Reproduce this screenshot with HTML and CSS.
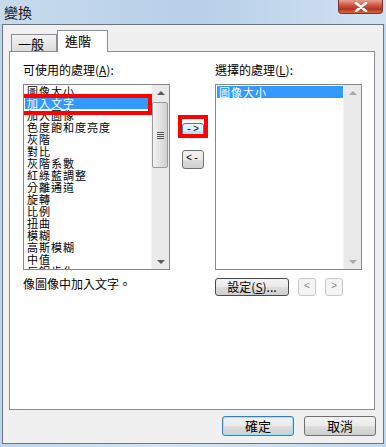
FILE: index.html
```html
<!DOCTYPE html>
<html>
<head>
  <title>變換</title>
  <link rel="stylesheet" href="styles.css">
</head>
<body>
  <div class="window">
    <div class="titlebar">
      <span class="title">變換</span>
      <span class="close">
        <svg width="16" height="10" viewBox="0 0 16 10"><path d="M3 1 L13 9 M13 1 L3 9" stroke="#fff" stroke-width="2.6" stroke-linecap="round"/></svg>
      </span>
    </div>
    <div class="client">
      <div class="tabs">
        <div class="tab">一般</div>
        <div class="tab active">進階</div>
      </div>
      <div class="panel">
        <div class="cols">
          <div class="col">
            <div class="label">可使用的處理(<u>A</u>):</div>
            <div class="listbox">
              <div class="items shifted">
                <div class="item">圖像大小</div>
                <div class="item sel">加入文字</div>
                <div class="item">加入圖像</div>
                <div class="item">色度飽和度亮度</div>
                <div class="item">灰階</div>
                <div class="item">對比</div>
                <div class="item">灰階系數</div>
                <div class="item">紅綠藍調整</div>
                <div class="item">分離通道</div>
                <div class="item">旋轉</div>
                <div class="item">比例</div>
                <div class="item">扭曲</div>
                <div class="item">模糊</div>
                <div class="item">高斯模糊</div>
                <div class="item">中值</div>
                <div class="item">反鋸齒化</div>
              </div>
              <div class="scroll">
                <span class="arrow up"></span>
                <span class="thumb"><span class="grip"></span></span>
                <span class="track"></span>
                <span class="arrow down"></span>
              </div>
              <span class="mark mark-item"></span>
            </div>
            <div class="desc">像圖像中加入文字。</div>
          </div>
          <div class="mid">
            <div class="btn-wrap">
              <button class="btn small hot">-&gt;</button>
              <span class="mark mark-btn"></span>
            </div>
            <button class="btn small back">&lt;-</button>
          </div>
          <div class="col">
            <div class="label">選擇的處理(<u>L</u>):</div>
            <div class="listbox">
              <div class="items">
                <div class="item sel">圖像大小</div>
              </div>
              <div class="scroll off">
                <span class="arrow up"></span>
                <span class="track"></span>
                <span class="arrow down"></span>
              </div>
            </div>
            <div class="row">
              <button class="btn setup">設定(<u>S</u>)...</button>
              <button class="btn tiny">&lt;</button>
              <button class="btn tiny">&gt;</button>
            </div>
          </div>
        </div>
      </div>
      <div class="footer">
        <button class="btn wide ok">確定</button>
        <button class="btn wide">取消</button>
      </div>
    </div>
  </div>
</body>
</html>
```

FILE: styles.css
```css
body { margin: 0; width: 386px; height: 447px; overflow: hidden; font-family: "Noto Sans CJK TC", "Liberation Sans", sans-serif; font-size: 12px; color: #000; background: linear-gradient(90deg, #bcd4ec, #d4e4f4 40%, #c2d8ee); }
.window { display: flex; flex-direction: column; height: 447px; }
.titlebar { height: 24px; display: flex; justify-content: space-between; align-items: flex-start; background: linear-gradient(90deg, #c8dbee, #b7cfe8 50%, #d2e2f2); }
.title { font-size: 14px; line-height: 14px; margin: 5px 0 0 4px; color: #1a1a1a; }
.close { width: 45px; height: 14px; margin-right: 3px; border: 1px solid #7a3330; border-top: none; border-radius: 0 0 4px 4px; background: linear-gradient(#e9a090, #c9503e 45%, #b5321f 70%, #d46a4a); display: flex; align-items: center; justify-content: center; box-sizing: border-box; }
.client { margin: 0 2px 3px 2px; height: 420px; border: 1px solid #6d7580; background: #f0f0f0; box-sizing: border-box; display: flex; flex-direction: column; }
.tabs { display: flex; align-items: flex-end; height: 26px; padding-left: 8px; }
.tab { height: 17px; padding: 0 10px 0 6px; border: 1px solid #8c8e94; border-bottom: none; background: linear-gradient(#f2f2f2, #dcdcdc); font-size: 13px; line-height: 18px; box-sizing: border-box; width: 46px; }
.tab.active { height: 22px; width: 51px; background: #fff; margin-bottom: -1px; position: relative; z-index: 1; padding-left: 7px; line-height: 20px; }
.panel { margin: 0 8px 0 6px; height: 359px; border: 1px solid #898c95; background: #fff; box-sizing: border-box; }
.cols { display: flex; padding: 11px 0 0 13px; }
.col { width: 147px; display: flex; flex-direction: column; }
.label { height: 21px; line-height: 14px; }
.listbox { position: relative; height: 186px; border: 1px solid #828790; box-sizing: border-box; display: flex; overflow: hidden; background: #fff; }
.items { flex: 1; padding: 1px 0 0 1px; }
.items.shifted { margin-top: -1px; }
.item { height: 12px; line-height: 12px; padding-left: 2px; white-space: nowrap; font-size: 11px; letter-spacing: 1px; }
.item.sel { background: #3399ff; color: #fff; }
.scroll { width: 17px; display: flex; flex-direction: column; background: #eaeaea; border-left: 1px solid #f4f4f4; }
.arrow { height: 16px; position: relative; }
.arrow::after { content: ""; position: absolute; left: 5px; top: 6px; border: 4px solid transparent; }
.arrow.up::after { border-bottom: 4px solid #5c5c5c; border-top: none; }
.arrow.down::after { border-top: 4px solid #5c5c5c; border-bottom: none; top: 7px; }
.scroll.off .arrow::after { border-bottom-color: #a8a8a8; }
.scroll.off .arrow.down::after { border-top-color: #a8a8a8; }
.thumb { height: 64px; margin: 1px 1px 0 0; border: 1px solid #9a9a9a; border-radius: 2px; background: linear-gradient(90deg, #f2f2f2, #dedede 60%, #d0d0d0); display: flex; align-items: center; justify-content: center; }
.grip { width: 7px; height: 7px; background: repeating-linear-gradient(#555 0 1px, transparent 1px 2px); }
.track { flex: 1; }
.mark { position: absolute; border: 4px solid #ff0000; box-sizing: border-box; pointer-events: none; }
.mark-item { left: -5px; top: 9px; width: 133px; height: 21px; }
.desc { margin-top: 7px; line-height: 14px; }
.mid { width: 45px; display: flex; flex-direction: column; align-items: flex-start; padding: 55px 0 0 12px; box-sizing: border-box; }
.btn-wrap { position: relative; }
.btn { font-family: "Noto Sans CJK TC", "Liberation Sans", sans-serif; font-size: 12px; border: 1px solid #707070; border-radius: 3px; background: linear-gradient(#f2f2f2, #ebebeb 50%, #dddddd 51%, #cfcfcf); padding: 0; color: #000; line-height: 12px; }
.btn.small { width: 22px; height: 17px; font-family: "Liberation Mono", monospace; font-size: 10px; letter-spacing: 1px; }
.btn.hot { height: 15px; border-color: #3c7fb1; background: linear-gradient(#eaf6fd, #d9f0fc 50%, #bee6fd 51%, #a7d9f5); margin-top: 1px; }
.mark-btn { left: -4px; top: -3px; width: 30px; height: 23px; }
.btn.back { margin-top: 12px; height: 19px; }
.row { display: flex; margin-top: 8px; align-items: center; }
.btn.setup { width: 74px; height: 18px; font-size: 12px; border-color: #4a4a4a; }
.btn.tiny { width: 18px; height: 18px; margin-left: 9px; border-color: #c8c8c8; background: #f4f4f4; color: #888; font-family: "Liberation Mono", monospace; font-size: 10px; }
.btn.tiny:first-of-type { margin-left: 12px; }
.footer { display: flex; justify-content: flex-end; gap: 10px; padding: 6px 7px 0 0; }
.btn.wide { width: 72px; height: 20px; font-size: 13px; }
.btn.ok { border-color: #3c7fb1; box-shadow: inset 0 0 0 1px #9fe0fb; }
```
